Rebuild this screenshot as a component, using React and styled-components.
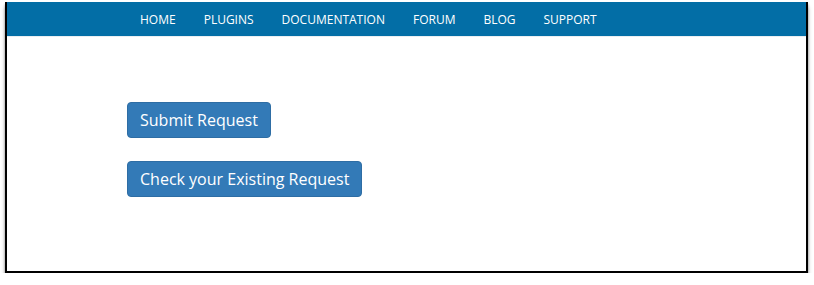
import React from 'react'
import styled, { createGlobalStyle } from 'styled-components'

const GlobalStyle = createGlobalStyle`
  body {
    margin: 0;
    background: #ffffff;
    font-family: "Open Sans", "Liberation Sans", sans-serif;
  }
`

const navItems = ['Home', 'Plugins', 'Documentation', 'Forum', 'Blog', 'Support']

const App = () => {
  return (
    <>
      <GlobalStyle />
      <Frame>
        <NavBar>
          <NavList>
            {navItems.map(item => (
              <NavLink key={item} href="#">{item}</NavLink>
            ))}
          </NavList>
        </NavBar>
        <Content>
          <Button>Submit Request</Button>
          <Button>Check your Existing Request</Button>
        </Content>
      </Frame>
    </>
  )
}

const Frame = styled.div`
  margin: 2px 0 0 5px;
  width: 799px;
  height: 269px;
  border: 2px solid #000;
  border-top: none;
  background: #fff;
  box-shadow: 0 5px 4px 0 rgba(0, 0, 0, 0.35), 0 2px 2px 0 rgba(0, 0, 0, 0.3);
`

const NavBar = styled.div`
  height: 34px;
  background-color: #036ea6;
  border-bottom: 1px solid #e9eef2;
`

const NavList = styled.nav`
  display: flex;
  align-items: center;
  height: 100%;
  padding: 0 0 1px 133px;
  gap: 28px;
`

const NavLink = styled.a`
  color: #fff;
  text-decoration: none;
  text-transform: uppercase;
  font-size: 12px;
`

const Content = styled.div`
  display: flex;
  flex-direction: column;
  align-items: flex-start;
  gap: 23px;
  padding: 65px 0 0 120px;
`

const Button = styled.button`
  font-family: "Open Sans", "Liberation Sans", sans-serif;
  font-size: 16px;
  line-height: 24px;
  color: #fff;
  background-color: #337ab7;
  border: 1px solid #2e6da4;
  border-radius: 4px;
  padding: 5px 12px;
  cursor: pointer;
`

export default App
